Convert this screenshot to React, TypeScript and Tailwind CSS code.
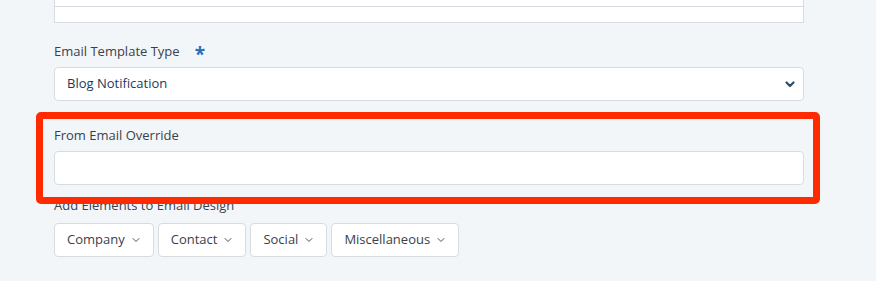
import { ChevronDown } from 'lucide-react';

const font = { fontFamily: '"Open Sans", "Noto Sans", sans-serif' };

const DropButton = ({ label }: { label: string }) => (
  <button className="h-[34px] pl-[12px] pr-[11px] flex items-center gap-[5px] bg-white border border-[#d7dce3] rounded-[4px] text-[13px] text-[#3a414c]">
    {label}
    <ChevronDown size={12} strokeWidth={2} className="text-[#4a5260]" />
  </button>
);

export default function App() {
  return (
    <div className="relative w-[876px] h-[281px] bg-[#f3f6f9] overflow-hidden" style={font}>
      <div className="ml-[54px] w-[750px]">
        <div className="h-[23px] bg-white border-x border-b border-[#d7dce3]">
          <div className="h-[7px] border-b border-[#d7dce3]" />
        </div>

        <div className="mt-[19px] h-[20px] flex items-center text-[13px] text-[#3a414c]">
          <span>Email Template Type</span>
          <span className="ml-[15px] text-[#2b6cb3] text-[19px] font-bold leading-none mt-[5px]">*</span>
        </div>
        <div className="mt-[5px] h-[34px] bg-white border border-[#d7dce3] rounded-[4px] flex items-center justify-between pl-[12px] pr-[6px]">
          <span className="text-[13px] text-[#1c3a60]">Blog Notification</span>
          <svg width="12" height="12" viewBox="0 0 12 12" className="mr-[1px]">
            <path d="M2.5 4.5 L6 8 L9.5 4.5" fill="none" stroke="#2a4a70" strokeWidth="2.2" strokeLinecap="round" strokeLinejoin="round" />
          </svg>
        </div>

        <div className="mt-[25px] h-[20px] flex items-center text-[13px] text-[#3a414c]">From Email Override</div>
        <div className="mt-[5px] h-[34px] bg-white border border-[#d7dce3] rounded-[4px]" />

        <div className="mt-[11px] h-[20px] flex items-center text-[13px] text-[#3a414c]">Add Elements to Email Design</div>
        <div className="mt-[7px] flex gap-[4px]">
          <DropButton label="Company" />
          <DropButton label="Contact" />
          <DropButton label="Social" />
          <DropButton label="Miscellaneous" />
        </div>
      </div>

      <div className="absolute left-[36px] top-[112px] w-[784px] h-[92px] border-[7px] border-[#ff2a00] rounded-[5px]" />
    </div>
  );
}
